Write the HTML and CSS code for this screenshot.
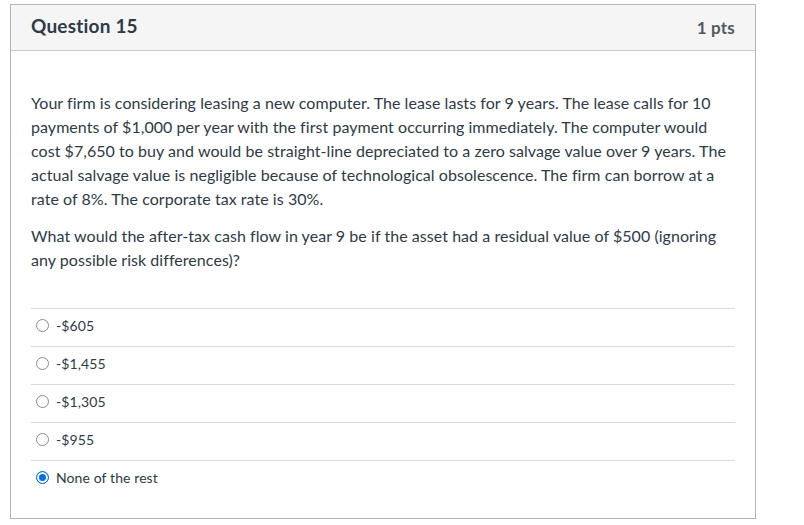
FILE: index.html
```html
<!DOCTYPE html>
<html>
<head>
<meta charset="utf-8">
<link rel="stylesheet" href="styles.css">
</head>
<body>
<div class="card">
  <div class="header">
    <span class="title">Question 15</span>
    <span class="pts">1 pts</span>
  </div>
  <div class="body">
    <p class="text">Your firm is considering leasing a new computer. The lease lasts for 9 years. The lease calls for 10 payments of $1,000 per year with the first payment occurring immediately. The computer would cost $7,650 to buy and would be straight-line depreciated to a zero salvage value over 9 years. The actual salvage value is negligible because of technological obsolescence. The firm can borrow at a rate of 8%. The corporate tax rate is 30%.</p>
    <p class="text q2">What would the after-tax cash flow in year 9 be if the asset had a residual value of $500 (ignoring any possible risk differences)?</p>
    <div class="answers">
      <div class="answer"><span class="radio"></span><span class="label">-$605</span></div>
      <div class="answer"><span class="radio"></span><span class="label">-$1,455</span></div>
      <div class="answer"><span class="radio"></span><span class="label">-$1,305</span></div>
      <div class="answer"><span class="radio"></span><span class="label">-$955</span></div>
      <div class="answer"><span class="radio checked"></span><span class="label">None of the rest</span></div>
    </div>
  </div>
</div>
</body>
</html>
```
FILE: styles.css
```css
html, body {
  margin: 0;
  padding: 0;
  background: #fff;
}
body {
  font-family: Lato, "Liberation Sans", sans-serif;
  color: #2d3b45;
  padding: 4px 0 0 10px;
}
.card {
  width: 744px;
  height: 513px;
  border: 1px solid #b5b5b5;
  box-sizing: content-box;
}
.header {
  height: 45px;
  background: #f5f5f5;
  border-bottom: 1px solid #c7cdd1;
  display: flex;
  align-items: center;
  justify-content: space-between;
  padding: 0 20px 0 20px;
}
.title {
  font-size: 19px;
  font-weight: 700;
  letter-spacing: 0.2px;
  color: #2d3b45;
  margin-top: -4px;
}
.pts {
  font-size: 17px;
  font-weight: 700;
  letter-spacing: 0.2px;
  color: #4d5a63;
  margin-top: 0;
}
.body {
  padding: 40px 20px 0 20px;
}
.text {
  margin: 0;
  font-size: 16px;
  letter-spacing: 0.05px;
  line-height: 24px;
  color: #2d3b45;
}
.q2 {
  margin-top: 13px;
}
.answers {
  margin-top: 36px;
}
.answer {
  border-top: 1px solid #dadada;
  display: flex;
  align-items: center;
  padding-left: 5px;
  padding-bottom: 4px;
  box-sizing: border-box;
  height: 38px;
}
.radio {
  width: 11px;
  height: 11px;
  border: 1px solid #8a8a8a;
  border-radius: 50%;
  box-sizing: content-box;
  margin-right: 7px;
  background: #fff;
}
.radio.checked {
  border: 1px solid #0770e3;
  background: #0770e3;
  box-shadow: inset 0 0 0 2px #fff;
}
.label {
  font-size: 14px;
  letter-spacing: 0.1px;
  color: #2d3b45;
}
```
